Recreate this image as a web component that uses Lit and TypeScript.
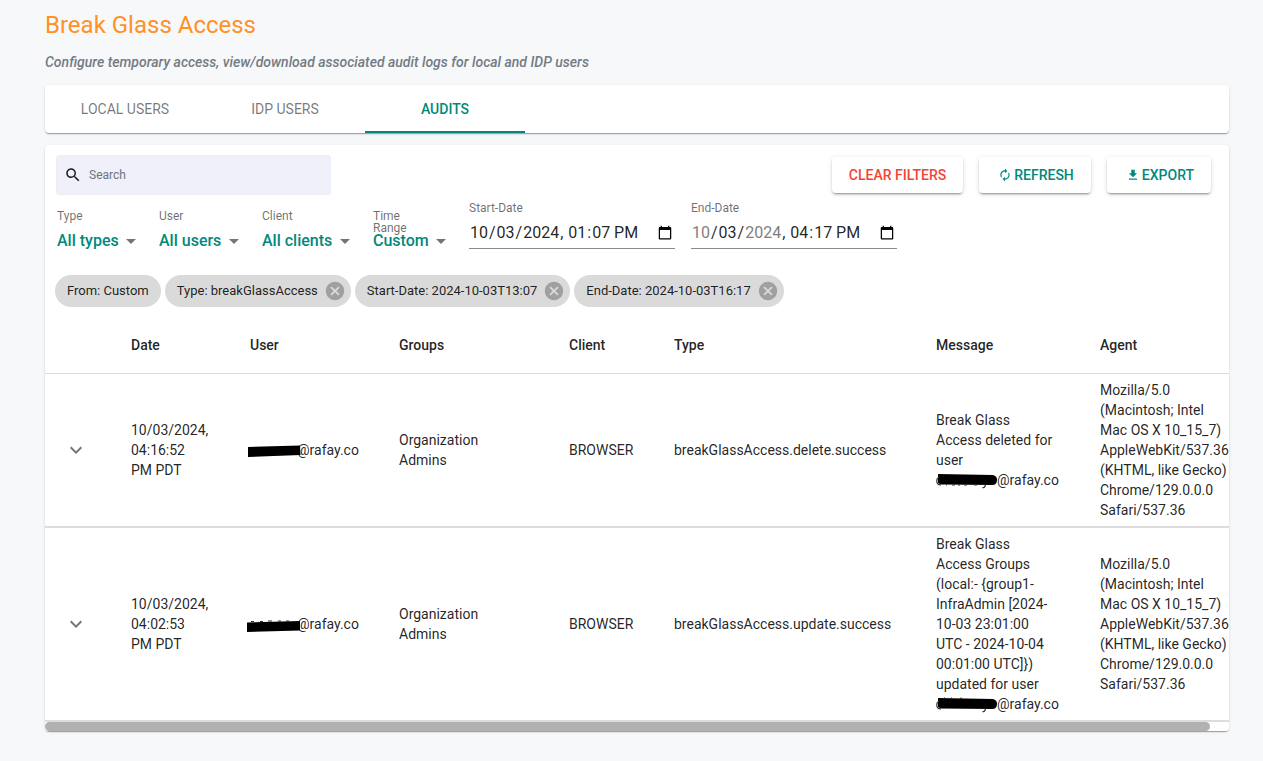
import { LitElement, html, css, svg } from "lit";
import { customElement, state } from "lit/decorators.js";
import { classMap } from "lit/directives/class-map.js";

interface AuditRow {
  date: string;
  groups: string;
  client: string;
  type: string;
  message: string;
  agent: string;
}

const AGENT =
  "Mozilla/5.0 (Macintosh; Intel Mac OS X 10_15_7) AppleWebKit/537.36 (KHTML, like Gecko) Chrome/129.0.0.0 Safari/537.36";

const ROWS: AuditRow[] = [
  {
    date: "10/03/2024, 04:16:52 PM\u00a0PDT",
    groups: "Organization Admins",
    client: "BROWSER",
    type: "breakGlassAccess.delete.success",
    message: "Break Glass Access deleted for user",
    agent: AGENT,
  },
  {
    date: "10/03/2024, 04:02:53 PM\u00a0PDT",
    groups: "Organization Admins",
    client: "BROWSER",
    type: "breakGlassAccess.update.success",
    message:
      "Break Glass Access Groups (local:- {group1-InfraAdmin [2024-10-03 23:01:00 UTC - 2024-10-04 00:01:00 UTC]}) updated for user",
    agent: AGENT,
  },
];

const TABS = ["LOCAL USERS", "IDP USERS", "AUDITS"];

const FILTERS = [
  { id: "type", label: "Type", value: "All types" },
  { id: "user", label: "User", value: "All users" },
  { id: "client", label: "Client", value: "All clients" },
  { id: "range", label: "Time Range", value: "Custom" },
];

const CHIPS = [
  { text: "From: Custom", removable: false },
  { text: "Type: breakGlassAccess", removable: true },
  { text: "Start-Date: 2024-10-03T13:07", removable: true },
  { text: "End-Date: 2024-10-03T16:17", removable: true },
];

const COLUMNS = ["Date", "User", "Groups", "Client", "Type", "Message", "Agent"];

const PATHS = {
  search:
    "M15.5 14h-.79l-.28-.27C15.41 12.59 16 11.11 16 9.5 16 5.91 13.09 3 9.5 3S3 5.91 3 9.5 5.91 16 9.5 16c1.61 0 3.09-.59 4.23-1.57l.27.28v.79l5 4.99L20.49 19l-4.99-5zm-6 0C7.01 14 5 11.99 5 9.5S7.01 5 9.5 5 14 7.01 14 9.5 11.99 14 9.5 14z",
  renew:
    "M12 6v3l4-4-4-4v3c-4.42 0-8 3.58-8 8 0 1.57.46 3.03 1.24 4.26L6.7 14.8c-.45-.83-.7-1.79-.7-2.8 0-3.31 2.69-6 6-6zm6.76 1.74L17.3 9.2c.44.84.7 1.79.7 2.8 0 3.31-2.69 6-6 6v-3l-4 4 4 4v-3c4.42 0 8-3.58 8-8 0-1.57-.46-3.03-1.24-4.26z",
  download: "M19 9h-4V3H9v6H5l7 7 7-7zM5 18v2h14v-2H5z",
  cancel:
    "M12 2C6.47 2 2 6.47 2 12s4.47 10 10 10 10-4.47 10-10S17.53 2 12 2zm5 13.59L15.59 17 12 13.41 8.41 17 7 15.59 10.59 12 7 8.41 8.41 7 12 10.59 15.59 7 17 8.41 13.41 12 17 15.59z",
  expand: "M16.59 8.59L12 13.17 7.41 8.59 6 10l6 6 6-6z",
  arrow: "M7 10l5 5 5-5z",
};

const icon = (name: keyof typeof PATHS, cls: string) =>
  html`<svg class=${cls} viewBox="0 0 24 24" aria-hidden="true">${svg`<path d=${PATHS[name]}></path>`}</svg>`;

@customElement("app-root")
export class AppRoot extends LitElement {
  @state() private tab = "AUDITS";

  static styles = css`
    :host {
      display: block;
      box-sizing: border-box;
      min-height: 100vh;
      padding: 8px 34px 29px 45px;
      background: #f7f8fa;
      color: rgba(0, 0, 0, 0.87);
      font-family: Roboto, "Liberation Sans", sans-serif;
      font-size: 14px;
      line-height: 20px;
    }
    * {
      box-sizing: border-box;
    }
    button,
    input,
    select {
      margin: 0;
      padding: 0;
      border: 0;
      background: none;
      color: inherit;
      font: inherit;
    }
    svg {
      display: block;
      flex: none;
      fill: currentColor;
    }
    h1 {
      margin: 0;
      color: #ff9127;
      font-size: 24px;
      font-weight: 400;
      line-height: 34px;
    }
    .subtitle {
      margin: 10px 0 13px;
      color: #727b84;
      font-style: italic;
      font-weight: 500;
    }
    .card {
      background: #fff;
      border-radius: 4px;
      box-shadow: 0 2px 1px -1px rgba(0, 0, 0, 0.2), 0 1px 1px rgba(0, 0, 0, 0.14),
        0 1px 3px rgba(0, 0, 0, 0.12);
    }
    .tabs {
      display: flex;
      margin-bottom: 12px;
    }
    .tab {
      width: 160px;
      height: 48px;
      border-bottom: 2px solid transparent;
      padding-top: 2px;
      color: rgba(0, 0, 0, 0.54);
      font-weight: 400;
    }
    .tab.active {
      border-color: #00897b;
      color: #00897b;
      font-weight: 500;
    }
    .panel {
      overflow: hidden;
    }
    .toolbar {
      display: flex;
      justify-content: space-between;
      padding: 10px 18px 0 11px;
    }
    .search {
      display: flex;
      align-items: center;
      gap: 7px;
      width: 275px;
      height: 40px;
      padding: 0 7px;
      border: 1px solid #eceef4;
      border-radius: 3px;
      background: #eff0f9;
    }
    .search-icon {
      width: 18px;
      height: 18px;
    }
    .search input {
      flex: 1;
      min-width: 0;
      font-size: 12px;
      outline: none;
    }
    .search input::placeholder {
      color: #6c757d;
      opacity: 1;
    }
    .actions {
      display: flex;
      gap: 16px;
      padding-top: 2px;
    }
    .btn {
      display: flex;
      align-items: center;
      justify-content: center;
      height: 36px;
      padding: 0 17px;
      border-radius: 4px;
      color: #00897b;
      font-weight: 500;
      box-shadow: 0 3px 1px -2px rgba(0, 0, 0, 0.2), 0 2px 2px rgba(0, 0, 0, 0.14),
        0 1px 5px rgba(0, 0, 0, 0.12);
    }
    .btn.danger {
      color: #f44336;
    }
    .btn-icon {
      width: 14px;
      height: 14px;
      margin: 0 2px;
    }
    .filters {
      display: flex;
      align-items: flex-start;
      gap: 16px;
      padding: 7px 12px 0;
    }
    .field {
      display: flex;
      flex-direction: column;
      gap: 7px;
      padding-top: 8px;
    }
    .field label,
    .date label {
      height: 12px;
      color: rgba(0, 0, 0, 0.58);
      font-size: 12px;
      line-height: 12px;
    }
    .field label {
      width: min-content;
    }
    .select {
      display: grid;
      align-items: center;
      color: #00897b;
    }
    .select select,
    .select-icon {
      grid-area: 1 / 1;
    }
    .select select {
      appearance: none;
      height: 24px;
      padding-right: 24px;
      font-size: 16px;
      font-weight: 500;
    }
    .select-icon {
      justify-self: end;
      width: 24px;
      height: 24px;
      color: rgba(0, 0, 0, 0.54);
      pointer-events: none;
    }
    .date {
      display: flex;
      flex-direction: column;
      gap: 2px;
      width: 206px;
    }
    .date input {
      height: 33px;
      padding-top: 2px;
      border-bottom: 1px solid rgba(0, 0, 0, 0.45);
      font-size: 16px;
    }
    .chips {
      display: flex;
      flex-wrap: wrap;
      gap: 4px;
      padding: 22px 10px 10px;
    }
    .chip {
      display: flex;
      align-items: center;
      height: 32px;
      padding: 0 12px;
      border-radius: 16px;
      background: #dadada;
      font-size: 13px;
    }
    .chip.removable {
      padding-right: 5px;
      gap: 6px;
    }
    .chip-icon {
      width: 22px;
      height: 22px;
      color: #a0a0a0;
    }
    .scroller {
      overflow-x: auto;
      scrollbar-width: none;
    }
    table {
      width: 100%;
      min-width: 1203px;
      border-collapse: separate;
      border-spacing: 0;
      table-layout: fixed;
    }
    .c-open {
      width: 70px;
    }
    .c-date {
      width: 119px;
    }
    .c-user {
      width: 149px;
    }
    .c-groups {
      width: 170px;
    }
    .c-client {
      width: 105px;
    }
    .c-type {
      width: 262px;
    }
    .c-message {
      width: 164px;
    }
    th,
    td {
      padding: 6px 16px;
      text-align: left;
      vertical-align: middle;
    }
    th {
      height: 57px;
      border-bottom: 1px solid #dcdcdc;
      font-weight: 500;
    }
    td {
      border-bottom: 2px solid #dcdcdc;
    }
    .groups {
      padding-right: 60px;
    }
    .nowrap {
      white-space: nowrap;
    }
    .message {
      padding-right: 27px;
    }
    .agent {
      padding-right: 19px;
    }
    .open {
      display: block;
      padding: 3px;
      color: rgba(0, 0, 0, 0.54);
    }
    .open-icon {
      width: 24px;
      height: 24px;
    }
    .mail {
      display: flex;
      align-items: center;
    }
    .mask {
      height: 20px;
      overflow: visible;
      fill: #000;
    }
    .mask.small {
      width: 47px;
    }
    .mask.large {
      width: 61px;
    }
    .letters {
      fill: none;
      stroke: #333;
      stroke-width: 1.2;
    }
    .track {
      height: 9px;
      background: #fff;
    }
    .thumb {
      width: 98.4%;
      height: 9px;
      border-radius: 5px;
      background: #b1b1b1;
    }
  `;

  private userMask(i: number) {
    return i === 0
      ? html`<svg class="mask small" viewBox="0 0 47 20" aria-hidden="true">
          <path d="M-2 7 L50 5.500 L50.500 15 L-2 17z"></path>
        </svg>`
      : html`<svg class="mask small" viewBox="0 0 47 20" aria-hidden="true">
          <path d="M-3 8.500 L50 7 L50 16.500 L-3 18z"></path>
          <path class="letters" d="M1 7.500h3M10 7.500h3M18 7h4M28 7h3M36 7h3"></path>
        </svg>`;
  }

  private messageMask(i: number) {
    return html`<svg class="mask large" viewBox="0 0 61 20" aria-hidden="true">
      <path d="M2 4 L57 5 Q61 6 61 9.500 Q61 14.500 57 15 L5 14.500 L2 13z"></path>
      <path class="letters" d="M3 7.500Q.8 8 .8 11 Q.8 15 5 14.800M46.500 17.500q2 .8 3-2.500"></path>
      ${i === 0
        ? svg`<path class="letters" d="M10 15h1M16 15h3M22 15h2M28 15h3M38 15h3"></path>`
        : svg`<path class="letters" d="M8 4h1M15 4h1M24 4.300h2"></path>`}
    </svg>`;
  }

  render() {
    return html`
      <h1>Break Glass Access</h1>
      <p class="subtitle">
        Configure temporary access, view/download associated audit logs for local and IDP users
      </p>
      <div class="card tabs" role="tablist">
        ${TABS.map(
          (t) => html`<button
            class=${classMap({ tab: true, active: t === this.tab })}
            role="tab"
            aria-selected=${t === this.tab}
            @click=${() => (this.tab = t)}
          >${t}</button>`
        )}
      </div>
      <section class="card panel">
        <div class="toolbar">
          <div class="search">
            ${icon("search", "search-icon")}
            <input type="text" placeholder="Search" aria-label="Search" />
          </div>
          <div class="actions">
            <button class="btn danger">CLEAR FILTERS</button>
            <button class="btn">${icon("renew", "btn-icon")}REFRESH</button>
            <button class="btn">${icon("download", "btn-icon")}EXPORT</button>
          </div>
        </div>
        <div class="filters">
          ${FILTERS.map(
            (f) => html`<div class="field">
              <label for=${f.id}>${f.label}</label>
              <div class="select">
                <select id=${f.id}>
                  <option>${f.value}</option>
                </select>
                ${icon("arrow", "select-icon")}
              </div>
            </div>`
          )}
          <div class="date">
            <label for="start">Start-Date</label>
            <input id="start" type="datetime-local" value="2024-10-03T13:07" />
          </div>
          <div class="date">
            <label for="end">End-Date</label>
            <input
              id="end"
              type="datetime-local"
              min="2024-10-03T13:07"
              max="2024-10-04T13:07"
              value="2024-10-03T16:17"
            />
          </div>
        </div>
        <div class="chips">
          ${CHIPS.map(
            (c) => html`<div class=${classMap({ chip: true, removable: c.removable })}>
              <span>${c.text}</span>
              ${c.removable
                ? html`<button aria-label="Remove filter">${icon("cancel", "chip-icon")}</button>`
                : ""}
            </div>`
          )}
        </div>
        <div class="scroller">
          <table>
            <colgroup>
              <col class="c-open" />
              <col class="c-date" />
              <col class="c-user" />
              <col class="c-groups" />
              <col class="c-client" />
              <col class="c-type" />
              <col class="c-message" />
              <col />
            </colgroup>
            <thead>
              <tr>
                <th></th>
                ${COLUMNS.map((c) => html`<th scope="col">${c}</th>`)}
              </tr>
            </thead>
            <tbody>
              ${ROWS.map(
                (r, i) => html`<tr>
                  <td>
                    <button class="open" aria-label="Expand row">
                      ${icon("expand", "open-icon")}
                    </button>
                  </td>
                  <td>${r.date}</td>
                  <td><div class="mail">${this.userMask(i)}<span>@rafay.co</span></div></td>
                  <td class="groups">${r.groups}</td>
                  <td>${r.client}</td>
                  <td class="nowrap">${r.type}</td>
                  <td class="message">
                    ${r.message}
                    <div class="mail">${this.messageMask(i)}<span>@rafay.co</span></div>
                  </td>
                  <td class="agent">${r.agent}</td>
                </tr>`
              )}
            </tbody>
          </table>
        </div>
        <div class="track"><div class="thumb"></div></div>
      </section>
    `;
  }
}
